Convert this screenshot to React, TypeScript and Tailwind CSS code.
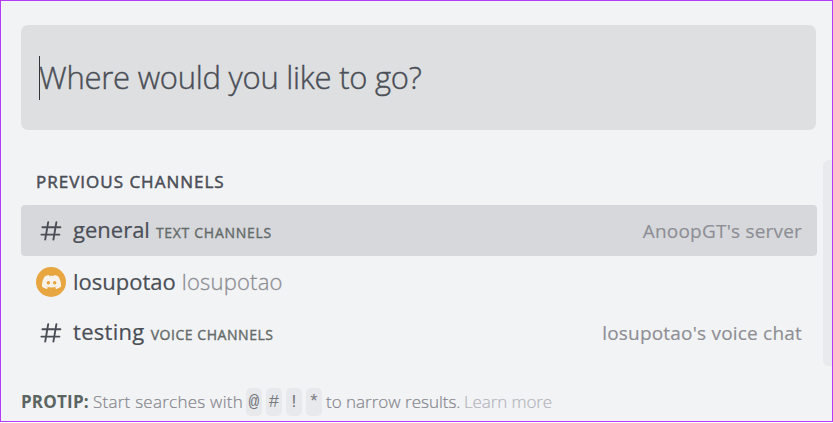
import type { ReactNode } from "react"
import clsx from "clsx"

const SEARCH_PREFIXES = ["@", "#", "!", "*"]

function HashIcon() {
    return (
        <svg width="22" height="20" viewBox="0 0 22 20" fill="none" stroke="#4a4e56" strokeWidth="1.9" strokeLinecap="round">
            <path d="M8.2 1.2L5.2 18.6M16.4 1.2L13.4 18.6M2.4 6.2H20.4M1.4 13.6H19.4" />
        </svg>
    )
}

function DiscordAvatar() {
    return (
        <span className="flex size-[30px] items-center justify-center rounded-full bg-[#e8a640]">
            <svg width="19" height="14" viewBox="0 0 24 18.2" preserveAspectRatio="none" fill="#f7f3ec">
                <path d="M20.317 1.516A19.79 19.79 0 0 0 15.432 0a.074.074 0 0 0-.079.037c-.21.375-.444.865-.608 1.25a18.27 18.27 0 0 0-5.487 0A12.64 12.64 0 0 0 8.64.037.077.077 0 0 0 8.562 0a19.736 19.736 0 0 0-4.885 1.515.07.07 0 0 0-.032.028C.533 6.192-.32 10.727.099 15.204a.082.082 0 0 0 .031.056 19.9 19.9 0 0 0 5.993 3.03.078.078 0 0 0 .084-.028c.462-.63.874-1.295 1.226-1.994a.076.076 0 0 0-.042-.105 13.1 13.1 0 0 1-1.872-.892.077.077 0 0 1-.008-.128c.126-.094.252-.192.372-.291a.074.074 0 0 1 .078-.011c3.928 1.793 8.18 1.793 12.061 0a.074.074 0 0 1 .079.01c.12.099.246.198.373.292a.077.077 0 0 1-.006.128 12.3 12.3 0 0 1-1.873.891.077.077 0 0 0-.041.106c.36.698.772 1.363 1.225 1.993a.076.076 0 0 0 .084.029 19.84 19.84 0 0 0 6.002-3.03.077.077 0 0 0 .032-.055c.5-5.177-.838-9.674-3.549-13.66a.06.06 0 0 0-.031-.03zM8.02 12.478c-1.183 0-2.157-1.086-2.157-2.419s.955-2.419 2.157-2.419c1.21 0 2.176 1.096 2.157 2.42 0 1.332-.956 2.418-2.157 2.418zm7.975 0c-1.183 0-2.157-1.086-2.157-2.419s.955-2.419 2.157-2.419c1.21 0 2.176 1.096 2.157 2.42 0 1.332-.947 2.418-2.157 2.418z" />
            </svg>
        </span>
    )
}

interface ResultRowProps {
    icon: ReactNode
    children: ReactNode
    server?: string
    selected?: boolean
}

function ResultRow({ icon, children, server, selected = false }: ResultRowProps) {
    return (
        <li className={clsx("flex h-[51px] items-center rounded-[4px] px-[15px]", selected && "bg-[#d7d8dc]")}>
            <span className="flex w-[30px] justify-center">{icon}</span>
            <span className="ml-[7px] flex flex-1 items-baseline leading-[31px] whitespace-nowrap">{children}</span>
            {server && (
                <span className="pt-px text-[19px] leading-[30px] tracking-[0.2px] text-[#8d8e94] [-webkit-text-stroke:0.15px]">{server}</span>
            )}
        </li>
    )
}

export default function App() {
    return (
        <div className="flex h-[422px] w-[833px] flex-col overflow-hidden border border-[#b43cf8] bg-[#f2f3f5] pl-5 font-['Open_Sans','Noto_Sans',sans-serif] text-[#4a4e56]">
            <div className="mt-6 flex h-[105px] w-[795px] shrink-0 items-center rounded-[7px] bg-[#dedfe1] pl-[18px]">
                <span className="h-11 w-px bg-[#313338]" />
                <span className="-ml-px text-[31px] font-light tracking-[-0.25px] whitespace-nowrap [-webkit-text-stroke:0.4px]">Where would you like to go?</span>
            </div>

            <div className="mt-[30px] flex h-[206px] shrink-0 justify-between">
                <div className="w-[796px]">
                    <h2 className="flex h-[45px] items-center pb-px pl-[15px] text-[17px] tracking-[1px] whitespace-nowrap [-webkit-text-stroke:0.5px]">PREVIOUS CHANNELS</h2>
                    <ul>
                        <ResultRow selected icon={<HashIcon />} server="AnoopGT's server">
                            <span className="text-[22px] [-webkit-text-stroke:0.2px]">general</span>
                            <span className="ml-[6px] text-[14px] tracking-[0.7px] text-[#646b69] [-webkit-text-stroke:0.4px]">TEXT CHANNELS</span>
                        </ResultRow>
                        <ResultRow icon={<DiscordAvatar />}>
                            <span className="text-[22px] [-webkit-text-stroke:0.2px]">losupotao</span>
                            <span className="ml-[6px] text-[22px] font-light tracking-[0.2px] text-[#8d8e94] [-webkit-text-stroke:0.3px]">losupotao</span>
                        </ResultRow>
                        <ResultRow icon={<HashIcon />} server="losupotao's voice chat">
                            <span className="text-[22px] tracking-[0.3px] [-webkit-text-stroke:0.2px]">testing</span>
                            <span className="ml-[6px] text-[14px] tracking-[0.55px] text-[#646b69] [-webkit-text-stroke:0.4px]">VOICE CHANNELS</span>
                        </ResultRow>
                    </ul>
                </div>
                <div className="w-[9px] rounded-l-[6px] bg-[#e9eaed]" />
            </div>

            <div className="mt-[21px] flex h-[30px] shrink-0 items-center text-[17px] whitespace-nowrap text-[#85868d]">
                <span className="w-[68px] font-bold tracking-[0.2px] text-[#5b6562]">PROTIP:</span>
                <span className="ml-1 w-[150px] font-light tracking-[0.25px] [-webkit-text-stroke:0.2px]">Start searches with</span>
                <span className="ml-[3px] flex gap-1">
                    {SEARCH_PREFIXES.map((prefix) => (
                        <kbd key={prefix} className="flex h-7 w-4 items-center justify-center rounded-[5px] bg-[#e8e9ec] pt-px font-['Liberation_Mono',monospace] text-[18px] text-[#777980]">
                            {prefix}
                        </kbd>
                    ))}
                </span>
                <span className="ml-1 w-[134px] font-light [-webkit-text-stroke:0.2px]">to narrow results.</span>
                <span className="ml-1 font-light tracking-[-0.1px] text-[#b4b5bd] [-webkit-text-stroke:0.2px]">Learn more</span>
            </div>
        </div>
    )
}
